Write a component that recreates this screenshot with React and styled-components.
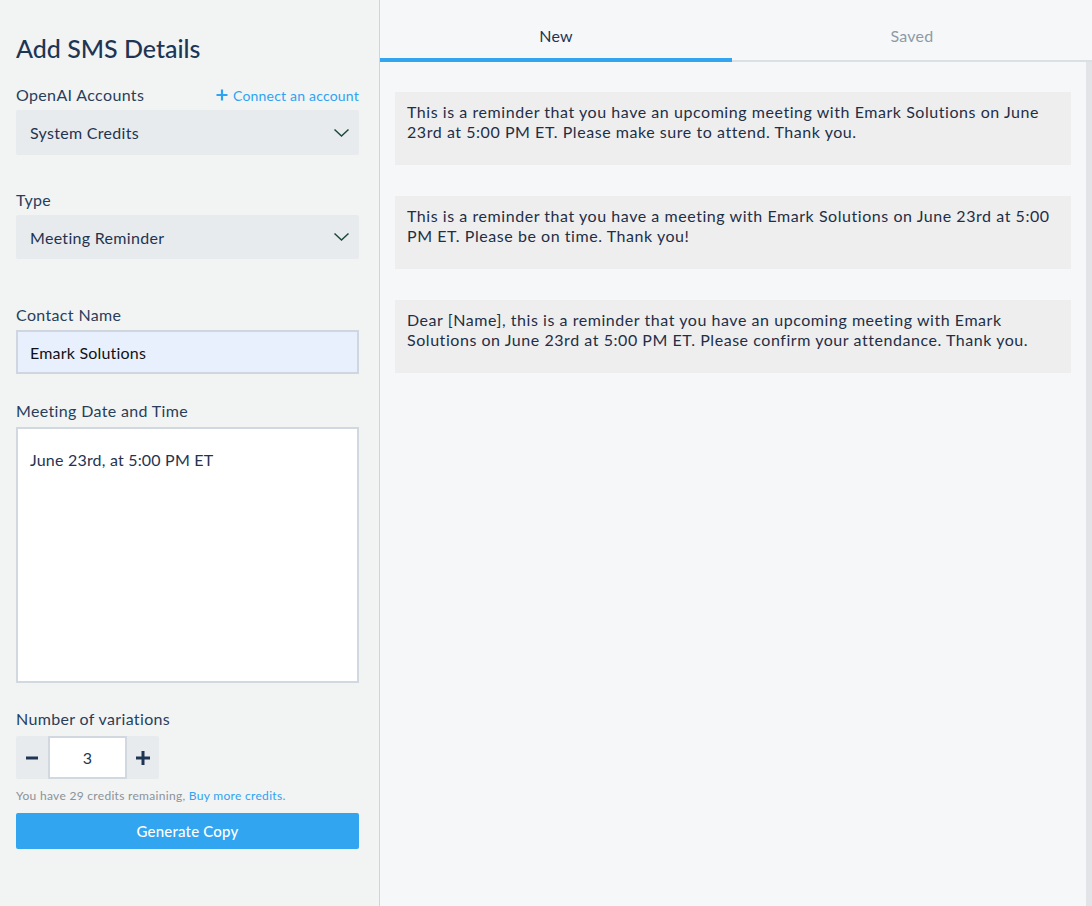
import React, { useState } from "react";
import styled, { createGlobalStyle } from "styled-components";

const GlobalStyle = createGlobalStyle`
  html, body {
    margin: 0;
    padding: 0;
    height: 100%;
  }
  body {
    font-family: "Lato", "Noto Sans", sans-serif;
    color: #1f3450;
  }
  #root {
    height: 100%;
  }
  * {
    box-sizing: border-box;
  }
`;

const Page = styled.div`
  display: flex;
  width: 1092px;
  height: 906px;
  overflow: hidden;
`;

const Sidebar = styled.div`
  width: 380px;
  flex-shrink: 0;
  background: #f2f3f3;
  border-right: 1px solid #d2d4d6;
  padding: 33px 20px 0 16px;
  display: flex;
  flex-direction: column;
`;

const Title = styled.h1`
  margin: 0 0 22px;
  font-size: 25px;
  font-weight: 500;
  color: #1e3553;
  line-height: 30px;
`;

const LabelRow = styled.div`
  display: flex;
  justify-content: space-between;
  align-items: center;
  margin-bottom: 5px;
`;

const Label = styled.div`
  font-size: 16px;
  letter-spacing: 0.35px;
  color: #283e5b;
  line-height: 20px;
`;

const Connect = styled.a`
  font-size: 14px;
  letter-spacing: 0.2px;
  color: #2ea3f2;
  display: flex;
  align-items: center;
  gap: 5px;
  cursor: pointer;
`;

const Select = styled.div`
  height: ${(p) => p.$h || 44}px;
  background: #e8ebee;
  border-radius: 2px;
  display: flex;
  align-items: center;
  justify-content: space-between;
  padding: 0 9px 0 14px;
  font-size: 16px;
  letter-spacing: 0.3px;
  color: #1f3450;
  margin-bottom: ${(p) => p.$mb || 0}px;
`;

const TextInput = styled.div`
  height: 44px;
  background: #e8f0fe;
  border: 2px solid #cfd6df;
  display: flex;
  align-items: center;
  padding: 0 12px;
  font-size: 16px;
  letter-spacing: 0.2px;
  color: #111;
  margin-bottom: 27px;
`;

const TextArea = styled.div`
  height: 256px;
  margin-top: 1px;
  background: #fff;
  border: 2px solid #d2d8e0;
  padding: 21px 12px;
  font-size: 16px;
  letter-spacing: 0.2px;
  color: #1f3450;
  line-height: 20px;
  margin-bottom: 26px;
`;

const Stepper = styled.div`
  display: flex;
  width: 143px;
  height: 43px;
  margin-top: 2px;
  background: #e8ebee;
  border-radius: 2px;
  align-items: stretch;
`;

const StepBtn = styled.button`
  width: 32px;
  border: none;
  background: transparent;
  display: flex;
  align-items: center;
  justify-content: center;
  color: #1e3553;
  padding: 0;
  cursor: pointer;
`;

const StepValue = styled.div`
  width: 79px;
  background: #fff;
  border: 2px solid #d2d8e0;
  display: flex;
  align-items: center;
  justify-content: center;
  font-size: 16px;
  color: #1e3553;
`;

const Credits = styled.div`
  font-size: 12px;
  letter-spacing: 0.3px;
  color: #8a929a;
  margin: 10px 0 10px;
  line-height: 14px;
  span {
    color: #2ea3f2;
  }
`;

const Generate = styled.button`
  height: 36px;
  width: 100%;
  border: none;
  border-radius: 2px;
  background: #31a5f0;
  color: #fff;
  font-family: inherit;
  font-size: 15px;
  font-weight: 500;
  letter-spacing: 0.2px;
  cursor: pointer;
`;

const Main = styled.div`
  flex: 1;
  background: #f6f7f9;
  display: flex;
  flex-direction: column;
`;

const Tabs = styled.div`
  display: flex;
  height: 62px;
  border-bottom: 2px solid #dcdfe3;
`;

const Tab = styled.div`
  ${(p) => (p.$width ? `width: ${p.$width}px;` : "flex: 1;")}
  display: flex;
  align-items: center;
  justify-content: center;
  font-size: 16px;
  letter-spacing: 0.2px;
  color: ${(p) => (p.$active ? "#1e3553" : "#8e9aa6")};
  border-bottom: 4px solid ${(p) => (p.$active ? "#31a5f0" : "transparent")};
  margin-bottom: -2px;
  padding-top: 12px;
  cursor: pointer;
`;

const Body = styled.div`
  flex: 1;
  display: flex;
`;

const Results = styled.div`
  flex: 1;
  padding: 30px 15px;
  display: flex;
  flex-direction: column;
  gap: 31px;
`;

const Scrollbar = styled.div`
  width: 6px;
  background: #e2e4e7;
`;

const Card = styled.div`
  background: #eeeeee;
  min-height: 73px;
  padding: 10px 12px 22px;
  font-size: 16px;
  letter-spacing: 0.55px;
  line-height: 20px;
  color: #1f2f46;
`;

const Chevron = () => (
  <svg width="17" height="10" viewBox="0 0 17 10" fill="none">
    <path d="M1.5 1.5L8.5 8L15.5 1.5" stroke="#1c4a3a" strokeWidth="1.5" />
  </svg>
);

const results = [
  "This is a reminder that you have an upcoming meeting with Emark Solutions on June 23rd at 5:00 PM ET. Please make sure to attend. Thank you.",
  "This is a reminder that you have a meeting with Emark Solutions on June 23rd at 5:00 PM ET. Please be on time. Thank you!",
  "Dear [Name], this is a reminder that you have an upcoming meeting with Emark Solutions on June 23rd at 5:00 PM ET. Please confirm your attendance. Thank you.",
];

export default function App() {
  const [count, setCount] = useState(3);
  const [tab, setTab] = useState("new");

  return (
    <>
      <GlobalStyle />
      <Page>
        <Sidebar>
          <Title>Add SMS Details</Title>

          <LabelRow>
            <Label>OpenAI Accounts</Label>
            <Connect>
              <svg width="12" height="12" viewBox="0 0 12 12">
                <path d="M6 0.5V11.5M0.5 6H11.5" stroke="#2ea3f2" strokeWidth="2.2" />
              </svg>
              Connect an account
            </Connect>
          </LabelRow>
          <Select $h={45} $mb={35}>
            System Credits
            <Chevron />
          </Select>

          <LabelRow>
            <Label>Type</Label>
          </LabelRow>
          <Select $h={44} $mb={46}>
            Meeting Reminder
            <Chevron />
          </Select>

          <LabelRow>
            <Label>Contact Name</Label>
          </LabelRow>
          <TextInput>Emark Solutions</TextInput>

          <LabelRow>
            <Label>Meeting Date and Time</Label>
          </LabelRow>
          <TextArea>June 23rd, at 5:00 PM ET</TextArea>

          <LabelRow>
            <Label>Number of variations</Label>
          </LabelRow>
          <Stepper>
            <StepBtn onClick={() => setCount(Math.max(1, count - 1))}>
              <svg width="12" height="12" viewBox="0 0 12 12">
                <path d="M0 6H12" stroke="#1e3553" strokeWidth="3" />
              </svg>
            </StepBtn>
            <StepValue>{count}</StepValue>
            <StepBtn onClick={() => setCount(count + 1)}>
              <svg width="14" height="14" viewBox="0 0 14 14">
                <path d="M7 0V14M0 7H14" stroke="#1e3553" strokeWidth="3" />
              </svg>
            </StepBtn>
          </Stepper>
          <Credits>
            You have 29 credits remaining, <span>Buy more credits.</span>
          </Credits>
          <Generate>Generate Copy</Generate>
        </Sidebar>

        <Main>
          <Tabs>
            <Tab $width={352} $active={tab === "new"} onClick={() => setTab("new")}>
              New
            </Tab>
            <Tab $active={tab === "saved"} onClick={() => setTab("saved")}>
              Saved
            </Tab>
          </Tabs>
          <Body>
            <Results>
              {results.map((text, i) => (
                <Card key={i}>{text}</Card>
              ))}
            </Results>
            <Scrollbar />
          </Body>
        </Main>
      </Page>
    </>
  );
}
